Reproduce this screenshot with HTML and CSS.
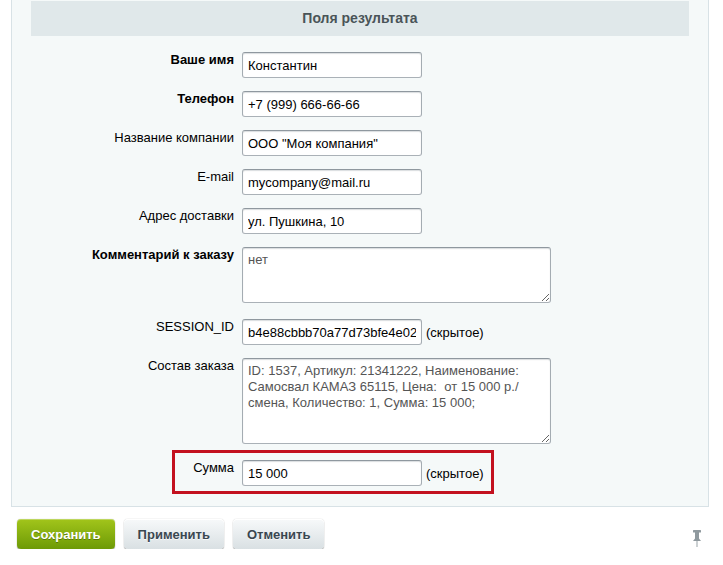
FILE: index.html
```html
<!DOCTYPE html>
<html lang="ru">
<head>
    <meta charset="UTF-8">
    <title>Поля результата</title>
    <link rel="stylesheet" href="styles.css">
</head>
<body>
    <!-- Result fields panel -->
    <div class="panel">
        <div class="panel-head">Поля результата</div>

        <div class="fields">
            <div class="row">
                <label class="label bold">Ваше имя</label>
                <div class="field"><input class="text" type="text" value="Константин"></div>
            </div>
            <div class="row">
                <label class="label bold">Телефон</label>
                <div class="field"><input class="text" type="text" value="+7 (999) 666-66-66"></div>
            </div>
            <div class="row">
                <label class="label">Название компании</label>
                <div class="field"><input class="text" type="text" value='ООО "Моя компания"'></div>
            </div>
            <div class="row">
                <label class="label">E-mail</label>
                <div class="field"><input class="text" type="text" value="mycompany@mail.ru"></div>
            </div>
            <div class="row">
                <label class="label">Адрес доставки</label>
                <div class="field"><input class="text" type="text" value="ул. Пушкина, 10"></div>
            </div>
            <div class="row">
                <label class="label bold">Комментарий к заказу</label>
                <div class="field"><textarea class="area area-small">нет</textarea></div>
            </div>
            <div class="row">
                <label class="label">SESSION_ID</label>
                <div class="field">
                    <input class="text" type="text" value="b4e88cbbb70a77d73bfe4e02c1a9">
                    <span class="note">(скрытое)</span>
                </div>
            </div>
            <div class="row">
                <label class="label">Состав заказа</label>
                <div class="field"><textarea class="area area-big">ID: 1537, Артикул: 21341222, Наименование: Самосвал КАМАЗ 65115, Цена:  от 15 000 р./смена, Количество: 1, Сумма: 15 000;</textarea></div>
            </div>
            <div class="row row-marked">
                <label class="label">Сумма</label>
                <div class="field">
                    <input class="text" type="text" value="15 000">
                    <span class="note">(скрытое)</span>
                </div>
            </div>
        </div>
    </div>

    <!-- Form buttons -->
    <div class="buttons">
        <div class="btn-group">
            <button class="btn btn-save">Сохранить</button>
            <button class="btn">Применить</button>
            <button class="btn">Отменить</button>
        </div>
        <svg class="pin" width="10" height="18" viewBox="0 0 10 18">
            <rect x="1" y="0" width="8" height="2.5" rx="0.5" fill="#8f999e"/>
            <rect x="3" y="2" width="4" height="7" fill="#8f999e"/>
            <path d="M3 8.5 L7 8.5 L9 11 L1 11 Z" fill="#8f999e"/>
            <rect x="4.5" y="11" width="1" height="6" fill="#9aa3a8"/>
        </svg>
    </div>
</body>
</html>
```

FILE: styles.css
```css
/* Reset */
*,
*::before,
*::after {
    margin: 0;
    padding: 0;
    box-sizing: border-box;
}

body {
    background: #fff;
    font-family: "Liberation Sans", Arial, sans-serif;
    font-size: 13px;
    color: #000;
}

/* Panel */
.panel {
    margin: 0 14px 0 11px;
    padding: 1px 19px 20px;
    background: #f5f9f9;
    border: 1px solid #d8e2e6;
    border-top: none;
}

.panel-head {
    height: 35px;
    line-height: 35px;
    text-align: center;
    background: #e0e8ea;
    color: #4a5458;
    font-size: 14px;
    font-weight: bold;
}

/* Fields */
.fields {
    display: flex;
    flex-direction: column;
    gap: 13px;
    padding-top: 16px;
}

.row {
    display: grid;
    grid-template-columns: 203px 1fr;
    column-gap: 8px;
    align-items: start;
}

.label {
    text-align: right;
    line-height: 15px;
}

.bold {
    font-weight: bold;
}

.field {
    display: flex;
    align-items: center;
    gap: 4px;
}

.text {
    width: 180px;
    height: 26px;
    padding: 0 5px;
    font-family: "Liberation Sans", Arial, sans-serif;
    font-size: 13px;
    color: #000;
    background: #fff;
    border: 1px solid;
    border-color: #8f989f #a4acb2 #aab1b7 #a4acb2;
    border-radius: 3px;
    box-shadow: inset 0 1px 1px rgba(180, 188, 191, 0.5);
    outline: none;
}

.area {
    display: block;
    width: 309px;
    padding: 4px 5px;
    font-family: "Liberation Sans", Arial, sans-serif;
    font-size: 13px;
    line-height: 16px;
    color: #555;
    background: #fff;
    border: 1px solid;
    border-color: #8f989f #a4acb2 #aab1b7 #a4acb2;
    border-radius: 3px;
    box-shadow: inset 0 1px 1px rgba(180, 188, 191, 0.5);
    margin-bottom: 3px;
    outline: none;
}

.area-small {
    height: 56px;
}

.area-big {
    height: 86px;
}

.note {
    color: #000;
}

/* Highlighted row */
.row-marked {
    position: relative;
}

.row-marked::after {
    content: "";
    position: absolute;
    left: 141px;
    top: -10px;
    width: 322px;
    height: 44px;
    border: 3px solid #c3111f;
    pointer-events: none;
}

/* Buttons */
.buttons {
    display: flex;
    justify-content: space-between;
    align-items: center;
    padding: 12px 21px 0 17px;
}

.btn-group {
    display: flex;
    gap: 9px;
}

.btn {
    height: 30px;
    padding: 0 14px;
    font-family: "Liberation Sans", Arial, sans-serif;
    font-size: 13px;
    font-weight: bold;
    color: #3a4750;
    text-shadow: 0 1px rgba(255, 255, 255, 0.7);
    background: linear-gradient(#f7f9fa, #d9e0e3);
    border: none;
    border-radius: 4px;
    box-shadow: 0 0 1px rgba(0, 0, 0, 0.35), 0 1px 1px rgba(0, 0, 0, 0.3), inset 0 1px #fff;
}

.btn-save {
    color: #fff;
    text-shadow: 0 1px rgba(0, 0, 0, 0.3);
    background: linear-gradient(#a2c51b, #6d9a06);
    box-shadow: 0 0 1px rgba(0, 0, 0, 0.3), 0 1px 1px rgba(0, 0, 0, 0.35), inset 0 1px rgba(255, 255, 255, 0.3);
}

.pin {
    display: block;
    margin-top: 9px;
}
```
